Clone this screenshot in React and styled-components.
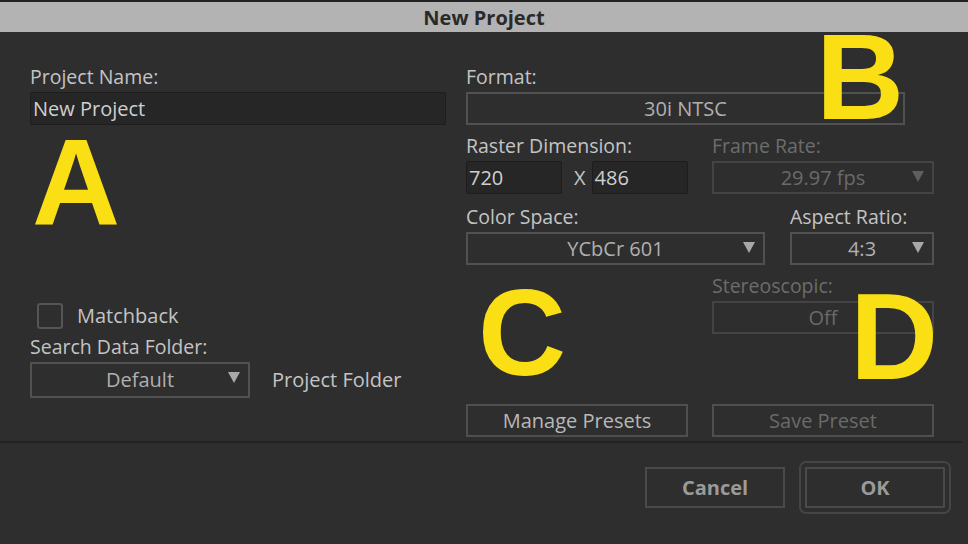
import React from "react";
import styled, { createGlobalStyle } from "styled-components";

const Global = createGlobalStyle`
  html, body { margin: 0; background: #2e2e2e; }
  body { font-family: "Open Sans", "Noto Sans", sans-serif; }
`;

const Dialog = styled.div`
  position: relative;
  width: 968px;
  height: 544px;
  background: #2e2e2e;
  border-top: 2px solid #222;
  box-sizing: border-box;
  overflow: hidden;
`;

const TitleBar = styled.div`
  height: 30px;
  background: #b3b3b3;
  color: #2a2a2a;
  font-weight: 700;
  font-size: 20px;
  display: flex;
  align-items: center;
  justify-content: center;
`;

const Body = styled.div`
  display: grid;
  grid-template-columns: 416px 468px;
  column-gap: 20px;
  padding: 32px 0 0 30px;
  height: 411px;
  box-sizing: border-box;
  border-bottom: 2px solid #232323;
  margin-right: 6px;
`;

const Column = styled.div`
  display: flex;
  flex-direction: column;
`;

const Row = styled.div`
  display: flex;
  gap: ${(p) => p.$gap ?? 24}px;
  margin-top: ${(p) => p.$top || 0}px;
  align-items: ${(p) => p.$align || "flex-start"};
`;

const Field = styled.div`
  display: flex;
  flex-direction: column;
  width: ${(p) => p.$w}px;
`;

const Label = styled.div`
  height: 26px;
  line-height: 26px;
  font-size: 19.5px;
  color: ${(p) => (p.$dim ? "#6c6c6c" : "#c4c4c4")};
  white-space: nowrap;
`;

const TextInput = styled.div`
  margin-top: 2px;
  height: 33px;
  box-sizing: border-box;
  width: ${(p) => (p.$w ? p.$w + "px" : "100%")};
  background: #262626;
  border: 1px solid #1d1d1d;
  border-radius: 2px;
  color: #cfcfcf;
  font-size: 20px;
  line-height: 31px;
  padding-left: 2px;
`;

const Select = styled.div`
  position: relative;
  margin-top: 2px;
  height: ${(p) => p.$h || 33}px;
  box-sizing: border-box;
  width: ${(p) => (p.$w ? p.$w + "px" : "100%")};
  border: 2px solid ${(p) => (p.$dim ? "#444" : "#515151")};
  color: ${(p) => (p.$dim ? "#6a6a6a" : "#b0b0b0")};
  font-size: 20px;
  line-height: ${(p) => (p.$h || 33) - 4}px;
  text-align: center;
`;

const Arrow = styled.span`
  position: absolute;
  right: 8px;
  top: 8px;
  width: 0;
  height: 0;
  border-left: 6px solid transparent;
  border-right: 6px solid transparent;
  border-top: 11px solid ${(p) => (p.$dim ? "#5e5e5e" : "#a8a8a8")};
`;

const Times = styled.span`
  color: #c4c4c4;
  font-size: 20px;
  line-height: 37px;
  margin: 0 6px 0 12px;
`;

const Check = styled.div`
  width: 26px;
  height: 26px;
  box-sizing: border-box;
  border: 2px solid #555;
  border-radius: 3px;
  margin-left: 7px;
`;

const CheckLabel = styled.span`
  color: #c4c4c4;
  font-size: 20px;
`;

const Button = styled.div`
  width: ${(p) => p.$w}px;
  height: 33px;
  box-sizing: border-box;
  border: 2px solid #4f4f4f;
  color: ${(p) => (p.$dim ? "#6a6a6a" : "#b8b8b8")};
  font-size: 20px;
  display: flex;
  align-items: center;
  justify-content: center;
`;

const Footer = styled.div`
  display: flex;
  justify-content: flex-end;
  gap: 20px;
  padding: 17px 23px 0 0;
`;

const DialogButton = styled.div`
  width: 140px;
  height: 41px;
  box-sizing: border-box;
  border: 2px solid #4a4a4a;
  color: #9a9a9a;
  font-weight: 700;
  font-size: 20px;
  display: flex;
  align-items: center;
  justify-content: center;
  margin-top: 7px;
  ${(p) =>
    p.$default && `outline: 2px solid #454545; outline-offset: 4px; border-radius: 1px;`}
`;

const Marker = styled.div`
  position: absolute;
  left: ${(p) => p.$x}px;
  top: ${(p) => p.$y}px;
  color: #f9df14;
  font-family: "Liberation Sans", Arial, sans-serif;
  font-weight: 700;
  font-size: 122px;
  line-height: 1;
`;

export default function App() {
  return (
    <>
      <Global />
      <Dialog>
        <TitleBar>New Project</TitleBar>
        <Body>
          <Column>
            <Field $w={416}>
              <Label>Project Name:</Label>
              <TextInput>New Project</TextInput>
            </Field>
            <Row $top={177} $gap={14} $align="center">
              <Check />
              <CheckLabel>Matchback</CheckLabel>
            </Row>
            <Label style={{ marginTop: 5 }}>Search Data Folder:</Label>
            <Row $gap={22} $align="center">
              <Select $w={220} $h={36}>
                Default
                <Arrow />
              </Select>
              <CheckLabel>Project Folder</CheckLabel>
            </Row>
          </Column>
          <Column>
            <Field $w={439}>
              <Label>Format:</Label>
              <Select>
                30i NTSC
                <Arrow />
              </Select>
            </Field>
            <Row $top={8}>
              <Field $w={222}>
                <Label>Raster Dimension:</Label>
                <Row $gap={0}>
                  <TextInput $w={96}>720</TextInput>
                  <Times>X</Times>
                  <TextInput $w={96}>486</TextInput>
                </Row>
              </Field>
              <Field $w={222}>
                <Label $dim>Frame Rate:</Label>
                <Select $dim>
                  29.97 fps
                  <Arrow $dim />
                </Select>
              </Field>
            </Row>
            <Row $top={8} $gap={25}>
              <Field $w={299}>
                <Label>Color Space:</Label>
                <Select>
                  YCbCr 601
                  <Arrow />
                </Select>
              </Field>
              <Field $w={144}>
                <Label>Aspect Ratio:</Label>
                <Select>
                  4:3
                  <Arrow />
                </Select>
              </Field>
            </Row>
            <Row $top={8}>
              <Field $w={222} style={{ marginLeft: 246 }}>
                <Label $dim>Stereoscopic:</Label>
                <Select $dim>Off</Select>
              </Field>
            </Row>
            <Row $top={70}>
              <Button $w={222}>Manage Presets</Button>
              <Button $w={222} $dim>
                Save Preset
              </Button>
            </Row>
          </Column>
        </Body>
        <Footer>
          <DialogButton>Cancel</DialogButton>
          <DialogButton $default>OK</DialogButton>
        </Footer>
        <Marker $x={32} $y={120}>A</Marker>
        <Marker $x={816} $y={14}>B</Marker>
        <Marker $x={478} $y={270}>C</Marker>
        <Marker $x={850} $y={274}>D</Marker>
      </Dialog>
    </>
  );
}
